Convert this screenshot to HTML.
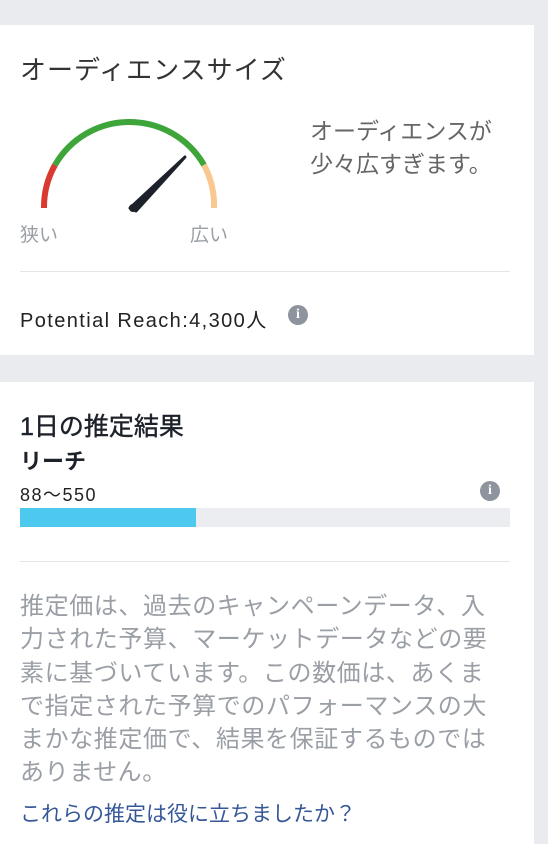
<!DOCTYPE html>
<html><head><meta charset="utf-8"><style>
*{margin:0;padding:0;box-sizing:border-box}
body{width:548px;height:844px;background:#e9ebee;font-family:"Liberation Sans","Noto Sans CJK JP",sans-serif;position:relative;overflow:hidden}
.card{position:absolute;left:0;width:534px;background:#fff}
.a{position:absolute;white-space:nowrap}
.info{position:absolute;width:20px;height:20px;border-radius:50%;background:#8d949e;color:#fff;font:bold 14px/20px "Liberation Serif",serif;text-align:center}
</style></head><body>
<div class="card" style="top:25px;height:330px"></div>
<div class="card" style="top:382px;height:462px"></div>
<div class="a" style="left:20px;top:50px;font-size:26px;letter-spacing:1px;color:#333">オーディエンスサイズ</div>
<svg class="a" style="left:0;top:100px" width="260" height="120" viewBox="0 100 260 120">
<path d="M44 208 A86 86 0 0 1 55 165" fill="none" stroke="#d93a30" stroke-width="6"/>
<path d="M55 165 A86 86 0 0 1 204 165" fill="none" stroke="#3ea53a" stroke-width="6"/>
<path d="M204 165 A86 86 0 0 1 214 208" fill="none" stroke="#f8c890" stroke-width="6"/>
<path d="M130 208 L185 157 L136 211 Z" fill="#1d2129" stroke="#1d2129" stroke-width="3" stroke-linejoin="round"/>
<circle cx="133" cy="208" r="4" fill="#1d2129"/>
</svg>
<div class="a" style="left:20px;top:220px;font-size:19px;color:#9a9ea5">狭い</div>
<div class="a" style="left:190px;top:220px;font-size:19px;color:#9a9ea5">広い</div>
<div class="a" style="left:310px;top:115px;font-size:23px;line-height:33px;color:#666">オーディエンスが<br>少々広すぎます。</div>
<div class="a" style="left:20px;top:271px;width:490px;height:1px;background:#e5e5e5"></div>
<div class="a" style="left:20px;top:304px;font-size:20px;letter-spacing:1.4px;color:#222">Potential Reach:4,300人</div>
<div class="info" style="left:288px;top:305px">i</div>
<div class="a" style="left:20px;top:407px;font-size:25px;color:#1d2129;-webkit-text-stroke:0.4px #1d2129">1日の推定結果</div>
<div class="a" style="left:20px;top:444px;font-size:22px;font-weight:bold;color:#1d2129">リーチ</div>
<div class="a" style="left:20px;top:481px;font-size:18px;letter-spacing:1.5px;color:#222">88〜550</div>
<div class="info" style="left:480px;top:481px">i</div>
<div class="a" style="left:20px;top:508px;width:490px;height:19px;background:#ebedf0"></div>
<div class="a" style="left:20px;top:508px;width:176px;height:19px;background:#4dc9f0"></div>
<div class="a" style="left:20px;top:561px;width:490px;height:1px;background:#e5e5e5"></div>
<div class="a" style="left:20px;top:590px;width:480px;white-space:normal;font-size:24px;line-height:33.3px;color:#9a9ea5;letter-spacing:0.6px">推定価は、過去のキャンペーンデータ、入力された予算、マーケットデータなどの要素に基づいています。この数価は、あくまで指定された予算でのパフォーマンスの大まかな推定価で、結果を保証するものではありません。</div>
<div class="a" style="left:20px;top:798px;font-size:21px;color:#365899">これらの推定は役に立ちましたか？</div>
</body></html>
